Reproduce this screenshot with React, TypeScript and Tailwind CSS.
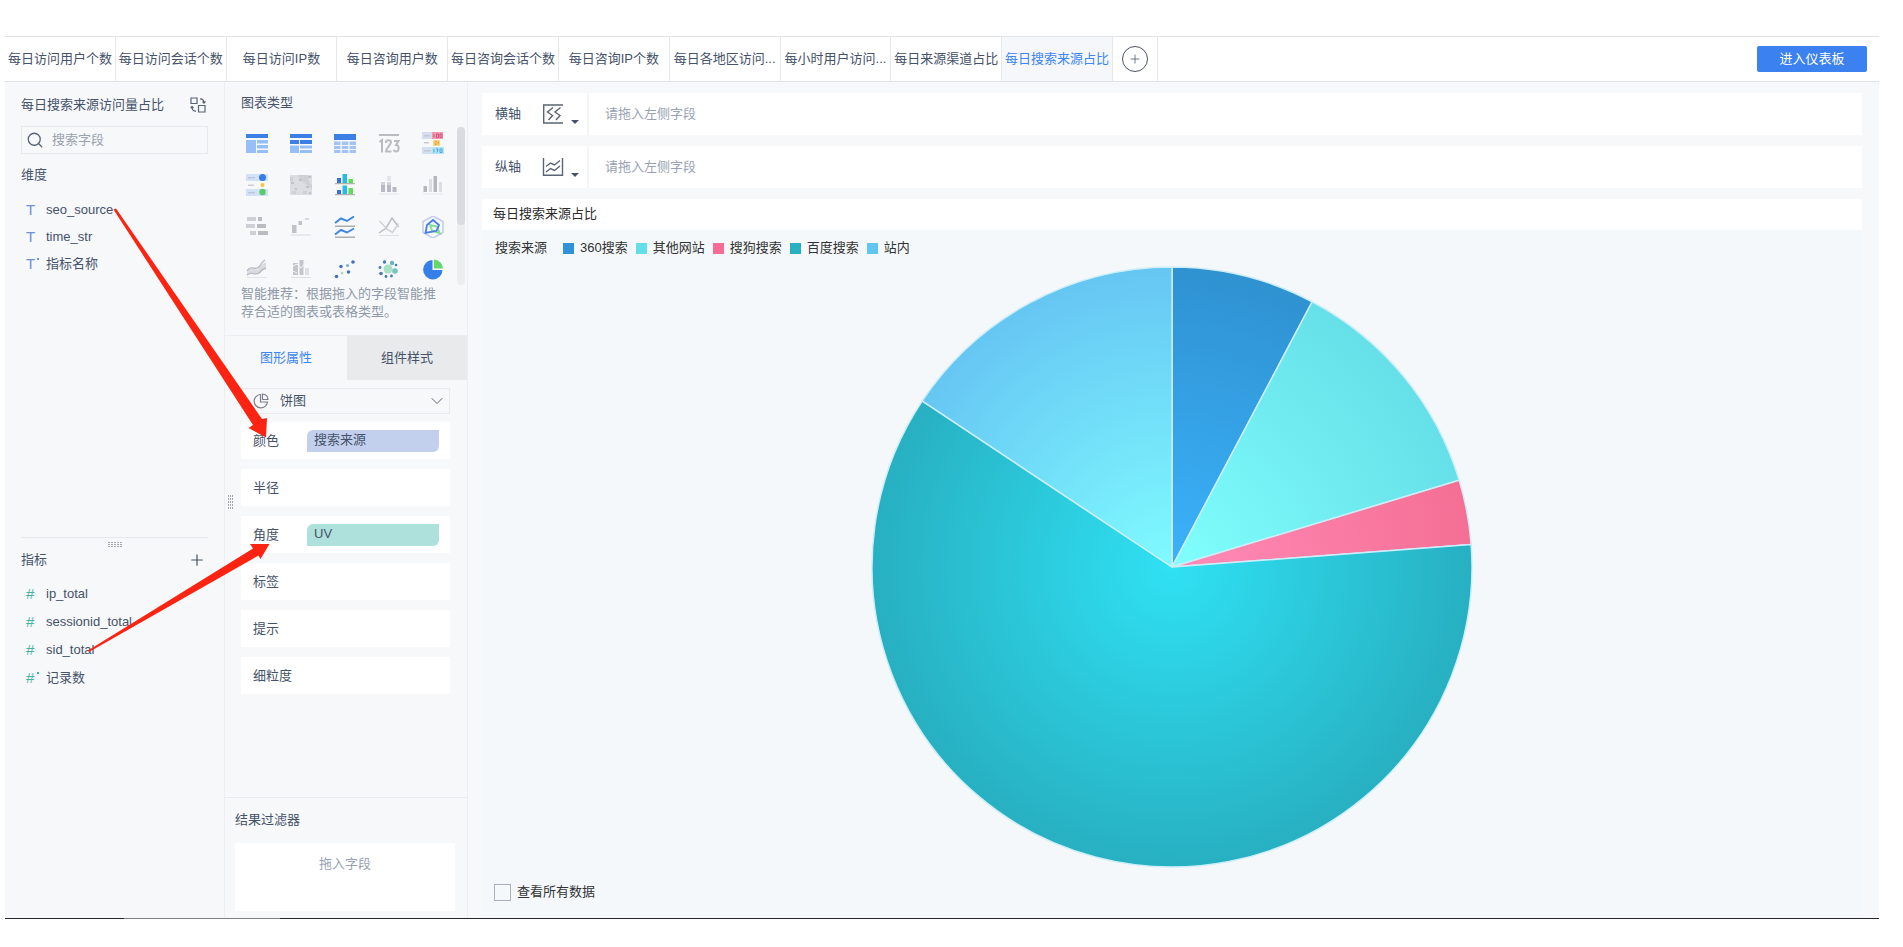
import React from "react";
import { Plus, Search, ChevronDown } from "lucide-react";

const tabs = [
  "每日访问用户个数",
  "每日访问会话个数",
  "每日访问IP数",
  "每日咨询用户数",
  "每日咨询会话个数",
  "每日咨询IP个数",
  "每日各地区访问...",
  "每小时用户访问...",
  "每日来源渠道占比",
  "每日搜索来源占比",
];

const dimensions = [
  { name: "seo_source", derived: false },
  { name: "time_str", derived: false },
  { name: "指标名称", derived: true },
];

const metrics = [
  { name: "ip_total", derived: false },
  { name: "sessionid_total", derived: false },
  { name: "sid_total", derived: false },
  { name: "记录数", derived: true },
];

const properties = [
  { name: "颜色", field: "搜索来源", tone: "bg-[#c2d0ee]" },
  { name: "半径" },
  { name: "角度", field: "UV", tone: "bg-[#aee1dc]" },
  { name: "标签" },
  { name: "提示" },
  { name: "细粒度" },
];

const slices = [
  { id: "s360", name: "360搜索", from: 0, to: 27.85, inner: "#3bb2fb", outer: "#2f92d1", swatch: "bg-[#2f92d8]" },
  { id: "other", name: "其他网站", from: 27.85, to: 73.2, inner: "#80fffd", outer: "#66e0e8", swatch: "bg-[#62dfe8]" },
  { id: "sogou", name: "搜狗搜索", from: 73.2, to: 85.7, inner: "#ff8bb8", outer: "#f56f94", swatch: "bg-[#f76c96]" },
  { id: "baidu", name: "百度搜索", from: 85.7, to: 303.6, inner: "#2fe1f3", outer: "#27b0c2", swatch: "bg-[#26b0c0]" },
  { id: "site", name: "站内", from: 303.6, to: 360, inner: "#7ffbff", outer: "#66c6f3", swatch: "bg-[#60c5f3]" },
];

const R = 300;

function slicePath(from: number, to: number) {
  const point = (deg: number) => {
    const a = (deg * Math.PI) / 180;
    return `${(301 + R * Math.sin(a)).toFixed(2)} ${(301 - R * Math.cos(a)).toFixed(2)}`;
  };
  return `M301 301L${point(from)}A${R} ${R} 0 ${to - from > 180 ? 1 : 0} 1 ${point(to)}Z`;
}

function PieChart() {
  return (
    <svg viewBox="0 0 602 602" className="mx-auto mt-2 h-[602px] max-w-full" role="img" aria-label="每日搜索来源占比">
      <defs>
        {slices.map((s) => (
          <radialGradient key={s.id} id={s.id} gradientUnits="userSpaceOnUse" cx="301" cy="301" r={R}>
            <stop offset="0" stopColor={s.inner} />
            <stop offset="1" stopColor={s.outer} />
          </radialGradient>
        ))}
      </defs>
      {slices.map((s) => (
        <path key={s.id} d={slicePath(s.from, s.to)} fill={`url(#${s.id})`} stroke="#cdeef8" strokeWidth="1.500" strokeLinejoin="round" />
      ))}
    </svg>
  );
}

const chartIcons: { label: string; art: React.ReactNode }[] = [
  {
    label: "分组表",
    art: (
      <>
        <path fill="#3b7fe6" d="M0 2h22v4H0z" />
        <path fill="#97bff7" d="M0 8h10v13H0zM11 8h11v3.5H11zM11 13h11v3.5H11zM11 18h11v3H11z" />
      </>
    ),
  },
  {
    label: "交叉表",
    art: (
      <>
        <path fill="#3b7fe6" d="M0 2h22v4H0zM0 8h9v4H0zM10 8h12v4H10z" />
        <path fill="#97bff7" d="M0 13.500h9V21H0zM10 13.500h12v3H10zM10 18h12v3H10z" />
      </>
    ),
  },
  {
    label: "明细表",
    art: (
      <>
        <path fill="#3b7fe6" d="M0 2h22v6H0z" />
        <path fill="#a3c3f4" d="M0 9.500h6.500V13H0zM7.800 9.500h6.500V13H7.800zM15.500 9.500H22V13h-6.500zM0 14h6.500v3H0zM7.800 14h6.500v3H7.800zM15.500 14H22v3h-6.500zM0 18h6.500v3H0zM7.800 18h6.500v3H7.800zM15.500 18H22v3h-6.500z" />
      </>
    ),
  },
  {
    label: "指标卡",
    art: (
      <>
        <path fill="#b9bbc0" d="M1 2h20v2H1z" />
        <g fill="none" stroke="#b9bbc0" strokeWidth="2">
          <path d="M1.500 10 4 8v12.500M8 11V10c0-2.500 5-2.500 5 0 0 3-5 6-5 9.500h5.500M16 9h4.500l-2.500 4c3.500 0 3.500 6.500 0 6.500-1.200 0-2-.6-2.300-1.800" />
        </g>
      </>
    ),
  },
  {
    label: "颜色表格",
    art: (
      <>
        <path fill="#d3def1" d="M0 0h10v7H0zM0 15h10v7H0z" />
        <path fill="#c9c7d0" d="M2 3h6v1.500H2zM2 10h5v1.500H2zM2 18h6v1.500H2z" />
        <path fill="#f09aae" d="M10 0h11v7H10z" />
        <path fill="#f9d58a" d="M11 8h7v6h-7z" />
        <path fill="#b4e2f8" d="M10 15h12v7H10z" />
        <path stroke="#d8557a" d="M12 2v3.500M14.500 2v3.500h2V2zM18 2h2v3.500h-2z" fill="none" />
        <path stroke="#e9a93c" d="M13 9.500h2v3h-2zM16.500 9.500v3" fill="none" />
        <path stroke="#43a9dc" d="M12 17v3.500M14 17h2l-1 3.500M18 17h2v3.500h-2z" fill="none" />
      </>
    ),
  },
  {
    label: "形状表格",
    art: (
      <>
        <path fill="#d2e0f8" d="M0 0h22v7H0zM0 15h22v7H0z" />
        <path fill="#bcc8df" d="M2 3h7v1.500H2zM2 18h7v1.500H2z" />
        <path fill="#cfcdd3" d="M2 10.500h6V12H2z" />
        <circle cx="16.500" cy="3.500" r="3.500" fill="#347de8" />
        <circle cx="16.500" cy="11" r="2" fill="#f7c343" />
        <circle cx="16.500" cy="18" r="3.200" fill="#58cc6c" />
      </>
    ),
  },
  {
    label: "热力图",
    art: (
      <>
        <path fill="#dcdde2" d="M0 1h22v20H0z" />
        <path fill="#cfd0d6" d="M8 1h9l3 9 2 1v4l-6-5-6-4zM0 3h3v4H0zM2 17h4v3H2zM13 17h4v3h-4z" />
        <path fill="#c0c2c9" d="M1 8h3v2H1zM9 5h3v2H9zM16 12h3v2h-3zM19 18h2v2h-2zM5 14h2v2H5zM18 2h3v2h-3z" />
      </>
    ),
  },
  {
    label: "分区柱形图",
    art: (
      <>
        <path fill="#b3b3b5" d="M1 9h20v1.300H1zM1 20h20v1.300H1z" />
        <path fill="#3a6fe0" d="M3 4h4v5H3zM3 16h4v4H3z" />
        <path fill="#27bedb" d="M8.500 0h4.500v9H8.500zM8.500 11.500h4.500V20H8.500z" />
        <path fill="#66d95b" d="M14.500 5h4.500v4h-4.500zM14.500 14h4.500v6h-4.500z" />
      </>
    ),
  },
  {
    label: "堆积柱形图",
    art: (
      <>
        <path fill="#e3e4e8" d="M1 19.500h20v1H1zM9 2h4v5H9z" />
        <path fill="#b8bac3" d="M3 8h4v10H3zM9 8h4v10H9zM14.500 13h4v5h-4z" />
        <path fill="#d2d3da" d="M3 8h4v3H3zM9 8h4v3H9z" />
      </>
    ),
  },
  {
    label: "多系列柱形图",
    art: (
      <>
        <path fill="#e5e6ea" d="M1 19.500h20v1H1z" />
        <path fill="#b5b7bf" d="M1.500 12h3.500v6H1.500zM11.500 2H15v16h-3.500z" />
        <path fill="#dcdde2" d="M7 5h3v13H7zM17 8h3v10h-3z" />
      </>
    ),
  },
  {
    label: "甘特图",
    art: (
      <>
        <path fill="#ced0d6" d="M1 1h9v4H1zM0 8h9v4H0zM4 15h6v4H4z" />
        <path fill="#b9bbc3" d="M12 1h4v4h-4zM11 8h9v4h-9zM12 15h10v4H12z" />
      </>
    ),
  },
  {
    label: "瀑布图",
    art: (
      <>
        <path fill="#c0c2ca" d="M2 9h4.500v8H2zM8.500 5H12v4H8.500z" />
        <path fill="#d9dadf" d="M15 2h4v2h-4zM1 18.500h20v1H1z" />
      </>
    ),
  },
  {
    label: "分区折线图",
    art: (
      <>
        <path fill="#adadaf" d="M1 9.500h20V11H1zM1 20.500h20V22H1z" />
        <path fill="none" stroke="#4388e0" strokeWidth="2" d="m1 7 6-4.500 6 2.500 7-4.500M1 18.500l6-4.500 6 2.500 7-4" />
      </>
    ),
  },
  {
    label: "多系列折线图",
    art: (
      <>
        <path fill="#e0e1e4" d="M1 19h20v1H1z" />
        <path fill="none" stroke="#babcc3" strokeWidth="1.500" d="m1 17 7-5 6-10 6.500 9" />
        <path fill="none" stroke="#ced0d5" strokeWidth="1.500" d="m1.500 5 8 8.500 5 3 6-9" />
      </>
    ),
  },
  {
    label: "雷达图",
    art: (
      <>
        <path fill="none" stroke="#c4cdf0" strokeWidth="1.600" d="m11 0 10 5.500v11L11 22 1 16.500v-11z" />
        <path fill="none" stroke="#82dd9c" strokeWidth="1.800" d="m8 9 7 1.500 3 7-8-3z" />
        <path fill="none" stroke="#4a80dc" strokeWidth="1.800" d="m11 4 6 5-2.500 6-11 2L5 9z" />
      </>
    ),
  },
  {
    label: "面积图",
    art: (
      <>
        <path fill="#dadbe1" d="M1 14c4-8 9 1 12-4 3-3 3-4 7-6v7c-4 1-4 3-7 5-3 1-8-3-12 2z" />
        <path fill="none" stroke="#b8bac3" strokeWidth="1.300" d="M1 13c4-7 8 0 12-4 3-3 2-5 6-7M1 17c4-4 8 1 12-2 3-3 3-4 7-5" />
        <path fill="#e3e4e8" d="M1 19h20v1H1z" />
      </>
    ),
  },
  {
    label: "组合图",
    art: (
      <>
        <path fill="#c3c5cc" d="M3 5h5v12H3zM9.500 2h4v15h-4z" />
        <path fill="#dedfe4" d="M15 10h4v7h-4zM1 19h20v1H1z" />
        <path fill="none" stroke="#f1f2f5" d="m3 8 4-2 4 4 5-6M3 13l4 2" />
      </>
    ),
  },
  {
    label: "散点图",
    art: (
      <>
        <g fill="#4470bd">
          <circle cx="2.500" cy="18.500" r="1.800" />
          <circle cx="7" cy="8.500" r="1.800" />
          <circle cx="14.500" cy="14" r="1.800" />
          <circle cx="19" cy="4" r="1.800" />
        </g>
        <circle cx="13.500" cy="7.500" r="1.600" fill="#7bb7c0" />
        <circle cx="8" cy="15" r="1.500" fill="#a8e2bd" />
      </>
    ),
  },
  {
    label: "聚合气泡图",
    art: (
      <>
        <circle cx="10" cy="11" r="4.500" fill="#a9dfc5" />
        <circle cx="17" cy="13" r="2.800" fill="#78c3c4" />
        <circle cx="14" cy="5" r="2.200" fill="#69b5bb" />
        <g fill="#4779b5">
          <circle cx="6.500" cy="4" r="1.700" />
          <circle cx="3" cy="15.500" r="1.800" />
          <circle cx="8" cy="18.500" r="1.400" />
          <circle cx="18" cy="7" r="1.300" />
          <circle cx="13.500" cy="18" r="1.400" />
          <circle cx="2" cy="9.500" r="1.400" />
        </g>
      </>
    ),
  },
  {
    label: "饼图",
    art: (
      <>
        <path fill="#3580e8" d="M10.500 2v10H20.500A9.700 9.700 0 1 1 10.500 2z" />
        <path fill="#63d86b" d="M12 1.500a9.700 9.700 0 0 1 9 9h-9z" />
      </>
    ),
  },
];

function Swap() {
  return (
    <svg viewBox="0 0 16 16" className="size-4" fill="none" stroke="#56627a" strokeWidth="1.200">
      <path d="M1 1h6v5.500H1zM8.500 8.500H15V15H8.500zM10 1.800c3 0 4 1 4 4M12.500 4.500 14 6.200l1.500-1.700M6 14.200c-3 0-4-1-4-4.500M.6 11.200 2 9.500l1.500 1.700" />
    </svg>
  );
}

function XAxisArt() {
  return (
    <svg viewBox="0 0 22 20" className="h-5 w-[22px]" fill="none" stroke="#5b6474" strokeWidth="1.400">
      <path d="M1 1h20M1 19h20M1.700 1v18M11 3.500 5.500 8l5 3.500-4 4.500M18.500 3.500 13 8l5 3.500-4 4.500" />
    </svg>
  );
}

function YAxisArt() {
  return (
    <svg viewBox="0 0 22 20" className="h-5 w-[22px]" fill="none" stroke="#5b6474" strokeWidth="1.400">
      <path d="M1.500 1v18M20.500 1v18M1 18.300h20M4 9.500 8.500 6l4 2L18 3.500M4 15l4.500-3.500 4 2L18 9" />
    </svg>
  );
}

function Axis({ label, children }: { label: string; children: React.ReactNode }) {
  return (
    <div className="flex h-[42px] items-center bg-white">
      <span className="w-[60px] pl-[13px]">{label}</span>
      <button type="button" aria-label={`${label}类型`} className="flex h-full w-[45px] items-center">
        {children}
        <svg viewBox="0 0 8 4" className="mt-4 ml-[7px] h-1 w-2" fill="#46536b">
          <path d="M0 0h8L4 4z" />
        </svg>
      </button>
      <div className="flex h-full flex-1 items-center border-l-2 border-[#f4f5f7] pl-4 text-[#98a2b3]">请拖入左侧字段</div>
    </div>
  );
}

function FieldList({ items, kind }: { items: { name: string; derived: boolean }[]; kind: "T" | "#" }) {
  const height = kind === "T" ? "h-[27px]" : "h-7";
  const tone = kind === "T" ? "text-[#6c93d6]" : "text-[#43b5a0]";
  return (
    <ul>
      {items.map((f) => (
        <li key={f.name} className={`flex items-center ${height}`}>
          <span className={`relative w-[25px] pl-[5px] text-[15px] ${tone}`}>
            {kind}
            {f.derived && <i className={`absolute top-1 left-4 size-[2px] ${kind === "T" ? "bg-[#6c93d6]" : "bg-[#43b5a0]"}`} />}
          </span>
          <span>{f.name}</span>
        </li>
      ))}
    </ul>
  );
}

function Grip({ vertical = false }: { vertical?: boolean }) {
  const steps = [0, 3, 6, 9, 12];
  return vertical ? (
    <svg viewBox="0 0 5 14" className="h-[14px] w-[5px]" fill="#a3a7ae">
      {steps.map((y) => (
        <path key={y} d={`M0 ${y}h1v2h-1zM2 ${y}h1v2h-1zM4 ${y}h1v2h-1z`} />
      ))}
    </svg>
  ) : (
    <svg viewBox="0 0 14 5" className="h-[5px] w-[14px]" fill="#a3a7ae">
      {steps.map((x) => (
        <path key={x} d={`M${x} 0h2v1h-2zM${x} 2h2v1h-2zM${x} 4h2v1h-2z`} />
      ))}
    </svg>
  );
}

export default function App() {
  return (
    <div className="relative flex min-h-screen flex-col bg-white pt-9 pr-6 pb-7 pl-[5px] font-['Liberation_Sans','Noto_Sans_CJK_SC',sans-serif] text-[13px] leading-5 text-[#45526a]">
      <header className="flex h-[46px] items-stretch border-y border-[#dfe2e6]">
        <nav className="flex w-[1108px] shrink-0">
          {tabs.map((t, i) => (
            <a
              key={t}
              href="#"
              className={`flex flex-1 items-center justify-center border-r border-[#e6e8ec] whitespace-nowrap ${i === tabs.length - 1 ? "bg-[#f5f7fa] text-[#3d85f2]" : ""}`}
            >
              {t}
            </a>
          ))}
        </nav>
        <div className="flex w-[45px] shrink-0 items-center justify-center border-r border-[#e6e8ec]">
          <button type="button" aria-label="添加组件" className="flex size-[26px] items-center justify-center rounded-full border border-[#4d5563]">
            <Plus className="size-3.5" strokeWidth={1.3} />
          </button>
        </div>
        <button type="button" className="mr-3 ml-auto h-[26px] w-[110px] self-center rounded-xs bg-[#3b82f0] text-white">
          进入仪表板
        </button>
      </header>

      <div className="flex flex-1 bg-[#f7f8fa]">
        <aside className="flex w-[220px] shrink-0 flex-col border-r border-[#eceef1] px-4">
          <section className="flex-6">
            <div className="flex items-center justify-between pt-[13px] pr-[2px]">
              <h2>每日搜索来源访问量占比</h2>
              <button type="button" aria-label="切换数据">
                <Swap />
              </button>
            </div>
            <label className="mt-[11px] flex h-7 items-center border border-[#e6e8eb] pl-1">
              <Search className="size-[18px] text-[#56627a]" strokeWidth={1.7} />
              <input aria-label="搜索字段" placeholder="搜索字段" className="ml-2 min-w-0 flex-1 bg-transparent outline-none placeholder:text-[#98a2ae]" />
            </label>
            <h3 className="mt-[11px] mb-[11px]">维度</h3>
            <FieldList items={dimensions} kind="T" />
          </section>
          <section className="flex-5 border-t border-[#e6e8eb]">
            <div className="flex justify-center pt-1">
              <Grip />
            </div>
            <div className="mt-[3px] mb-[10px] flex items-center justify-between pr-[2px]">
              <h3>指标</h3>
              <button type="button" aria-label="添加指标">
                <Plus className="size-[18px]" strokeWidth={1.6} />
              </button>
            </div>
            <FieldList items={metrics} kind="#" />
          </section>
        </aside>

        <aside className="relative flex w-[243px] shrink-0 flex-col border-r border-[#eceef1]">
          <div className="absolute top-[413px] left-[3px]">
            <Grip vertical />
          </div>
          <section className="px-4 pt-[11px] pb-[14px]">
            <h2>图表类型</h2>
            <div className="-mr-[14px] mt-[5px] flex">
              <div className="mt-1 -ml-[6px] grid h-[163px] w-[220px] auto-rows-[42px] grid-cols-5 overflow-hidden">
                {chartIcons.map((c) => (
                  <button key={c.label} type="button" aria-label={c.label} className="flex items-center justify-center">
                    <svg viewBox="0 0 22 22" className="size-[22px]">
                      {c.art}
                    </svg>
                  </button>
                ))}
              </div>
              <div className="mt-[9px] ml-auto h-[158px] w-2 rounded bg-[#ecedef]">
                <div className="h-[98px] rounded bg-[#d9dbde]" />
              </div>
            </div>
            <p className="mr-2 leading-[18px] text-[#8e98a8]">智能推荐：根据拖入的字段智能推荐合适的图表或表格类型。</p>
          </section>
          <div className="flex h-[45px] border-t border-[#eceef1]" role="tablist">
            <button type="button" role="tab" aria-selected="true" className="w-[122px] text-[#3d85f2]">
              图形属性
            </button>
            <button type="button" role="tab" aria-selected="false" className="flex-1 bg-[#e8eaec]">
              组件样式
            </button>
          </div>
          <div className="flex flex-1 flex-col pt-2 pr-[17px] pl-4">
            <div className="relative flex h-[26px] items-center border border-[#e8eaed]">
              <svg viewBox="0 0 16 16" className="pointer-events-none absolute left-[11px] size-4" fill="none" stroke="#7b828d" strokeWidth="1.200">
                <path d="M7.500 1.500a6.700 6.700 0 1 0 7 7.500h-7zM9.500 1v5.500h5.500A6 6 0 0 0 9.500 1z" />
              </svg>
              <select aria-label="图表类型" className="h-full w-full appearance-none bg-transparent pl-[38px] outline-none">
                <option>饼图</option>
              </select>
              <ChevronDown className="pointer-events-none absolute right-[2px] size-5 text-[#5b6474]" strokeWidth={1.2} />
            </div>
            <ul className="mt-2 flex flex-col gap-[10px]">
              {properties.map((p) => (
                <li key={p.name} className="flex h-[37px] items-center bg-white pr-[11px] pl-3">
                  <span className="w-[54px]">{p.name}</span>
                  {p.field && <span className={`h-[22px] flex-1 rounded-tl-md rounded-br-md pl-[7px] ${p.tone}`}>{p.field}</span>}
                </li>
              ))}
            </ul>
          </div>
          <section className="border-t border-[#e9ebee] pt-3 pr-3 pb-[7px] pl-[10px]">
            <h2>结果过滤器</h2>
            <div className="mt-[13px] h-[68px] bg-white pt-[11px] text-center text-[#98a2b3]">拖入字段</div>
          </section>
        </aside>

        <main className="flex min-w-0 flex-1 flex-col pt-[11px] pr-[17px] pl-[14px]">
          <div className="flex flex-col gap-[11px]">
            <Axis label="横轴">
              <XAxisArt />
            </Axis>
            <Axis label="纵轴">
              <YAxisArt />
            </Axis>
            <h1 className="h-[31px] bg-white pt-[5px] pl-[11px] text-[#2b2b2b]">每日搜索来源占比</h1>
          </div>
          <div className="flex flex-1 flex-col bg-[#f4f8fb] pt-2 text-[#333333]">
            <div className="flex items-center gap-2 pl-[13px]">
              <span className="mr-2">搜索来源</span>
              {slices.map((s) => (
                <span key={s.id} className="flex items-center gap-[6px]">
                  <i className={`size-[11px] ${s.swatch}`} />
                  {s.name}
                </span>
              ))}
            </div>
            <PieChart />
            <label className="mt-auto mb-4 flex items-center gap-[6px] self-start pl-3">
              <input type="checkbox" className="size-[17px] appearance-none border border-[#a9b0ba] bg-transparent checked:bg-[#3b82f0]" />
              查看所有数据
            </label>
          </div>
        </main>
      </div>
      <div className="flex h-px">
        <div className="w-[119px] bg-[#26282c]" />
        <div className="w-[156px] bg-[#7d7f83]" />
        <div className="flex-1 bg-[#26282c]" />
      </div>

      <svg className="pointer-events-none absolute top-0 left-0 h-[700px] w-[300px]" viewBox="0 0 300 700" fill="#fb2412">
        <path d="M113.500 209.500 116 208.500l146 210.500 5-1-1 19.500-17.500-9.500 4.500-3z" />
        <path d="m88 650.500 165-102-3-4.500H269.500l-9 15-2-3.500L89 652z" />
      </svg>
    </div>
  );
}
